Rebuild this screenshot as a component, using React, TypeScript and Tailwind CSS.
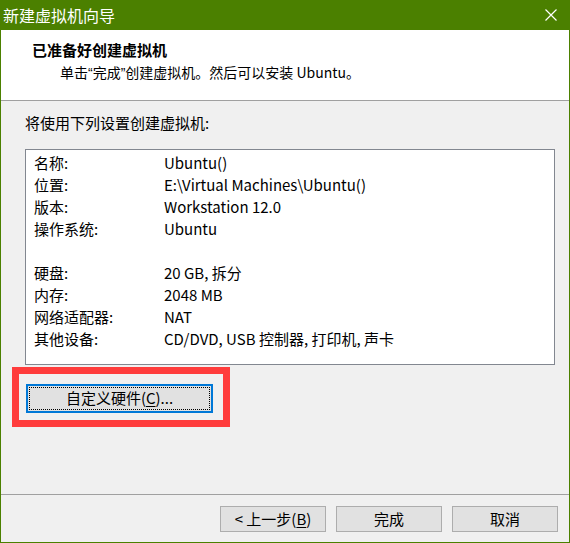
const rows: [string, string][] = [
  ['名称:', 'Ubuntu()'],
  ['位置:', 'E:\\Virtual Machines\\Ubuntu()'],
  ['版本:', 'Workstation 12.0'],
  ['操作系统:', 'Ubuntu'],
  ['', ''],
  ['硬盘:', '20 GB, 拆分'],
  ['内存:', '2048 MB'],
  ['网络适配器:', 'NAT'],
  ['其他设备:', 'CD/DVD, USB 控制器, 打印机, 声卡'],
]

const App = () => {
  return (
    <div className="w-[570px] h-[543px] bg-[#4b8000] px-px pb-px flex flex-col font-['Noto_Sans_CJK_SC','Noto_Sans',sans-serif] text-black">
      {/* title bar */}
      <div className="h-[30px] shrink-0 flex items-center justify-between pl-[2px] pr-[12px]">
        <span className="text-white text-[16px] leading-[20px]">新建虚拟机向导</span>
        <svg width="12" height="12" viewBox="0 0 12 12">
          <path d="M0.5 0.5 L11.5 11.5 M11.5 0.5 L0.5 11.5" stroke="white" strokeWidth="1.2" />
        </svg>
      </div>

      {/* header */}
      <div className="h-[71px] shrink-0 bg-white border-b border-[#a0a0a0] pl-[31px] pt-[11px]">
        <div className="text-[15px] leading-[18px] font-bold">已准备好创建虚拟机</div>
        <div className="text-[14px] leading-[18px] mt-[4px] pl-[28px]">
          单击<span className="font-['Liberation_Sans',sans-serif]">“</span>完成<span className="font-['Liberation_Sans',sans-serif]">”</span>创建虚拟机。然后可以安装 Ubuntu。
        </div>
      </div>

      {/* body */}
      <div className="flex-1 bg-[#f0f0f0] flex flex-col">
        <div className="pl-[24px] pt-[12px] text-[15px] leading-[20px]">将使用下列设置创建虚拟机:</div>

        <div className="ml-[24px] mt-[16px] w-[530px] h-[216px] bg-white border border-[#828790] pt-[2px] pl-[8px]">
          {rows.map(([k, v], i) => (
            <div key={i} className="flex h-[22px] items-center text-[15px]">
              <span className="w-[130px]">{k}</span>
              <span>{v}</span>
            </div>
          ))}
        </div>

        <div className="ml-[11px] mt-[2px] w-[218px] h-[60px] border-[7px] border-[#ff3c3c] pl-[7px] pt-[10px]">
          <div className="w-[187px] h-[29px] border-2 border-[#0078d7] bg-[#e1e1e1] p-px">
            <div className="w-full h-full border border-dotted border-black flex items-center justify-center text-[15px]">
              自定义硬件(<span className="underline underline-offset-2">C</span>)...
            </div>
          </div>
        </div>

        {/* footer */}
        <div className="mt-auto border-t border-[#a0a0a0] pt-[11px] pb-[10px] flex justify-end gap-[10px] pr-[11px]">
          <div className="w-[106px] h-[26px] border border-[#adadad] bg-[#e1e1e1] flex items-center justify-center text-[15px]">
            &lt; 上一步(<span className="underline underline-offset-2">B</span>)
          </div>
          <div className="w-[106px] h-[26px] border border-[#adadad] bg-[#e1e1e1] flex items-center justify-center text-[15px]">
            完成
          </div>
          <div className="w-[106px] h-[26px] border border-[#adadad] bg-[#e1e1e1] flex items-center justify-center text-[15px]">
            取消
          </div>
        </div>
      </div>
    </div>
  )
}

export default App
